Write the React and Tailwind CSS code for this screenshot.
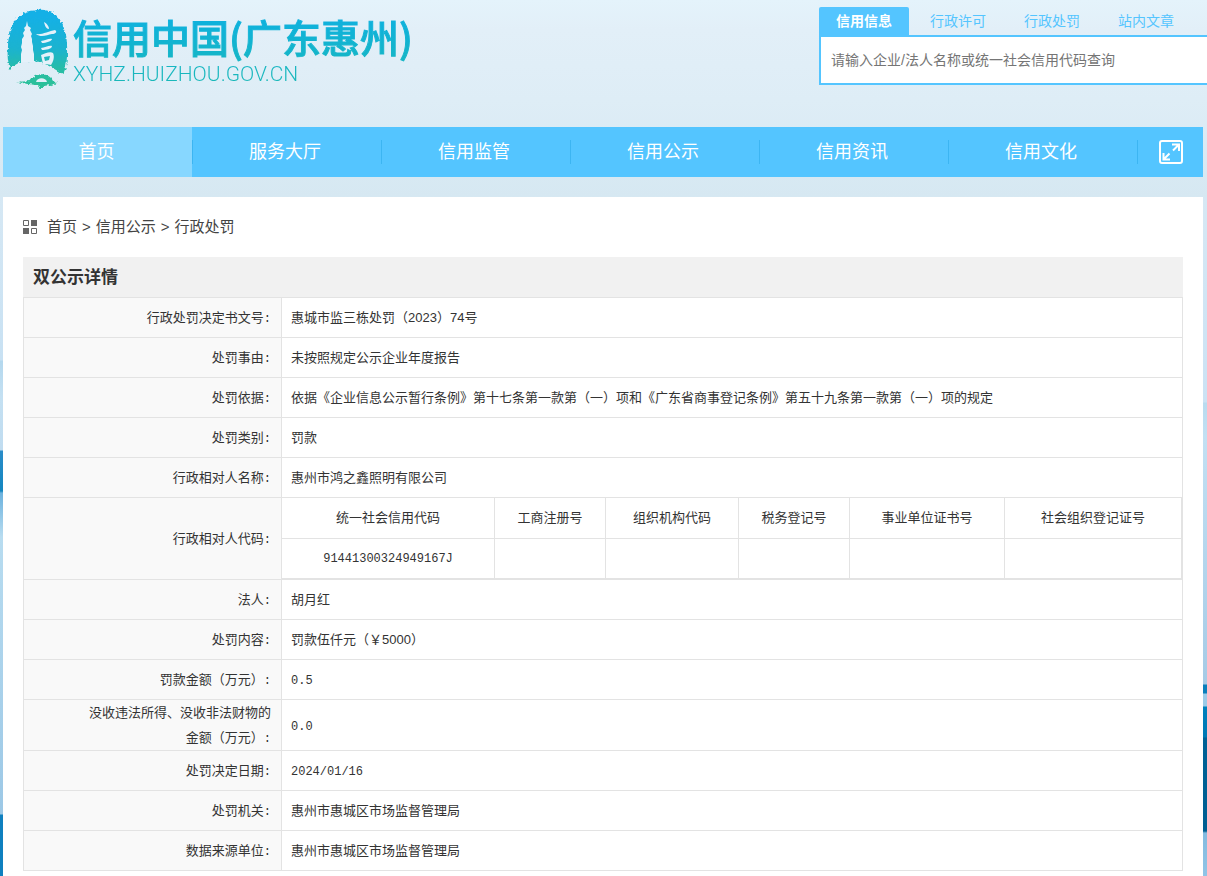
import React from 'react';

const SEARCH_TABS = ['信用信息', '行政许可', '行政处罚', '站内文章'];

const NAV_ITEMS = ['首页', '服务大厅', '信用监管', '信用公示', '信用资讯', '信用文化'];

const ROWS_BEFORE = [
  { label: '行政处罚决定书文号', value: '惠城市监三栋处罚（2023）74号' },
  { label: '处罚事由', value: '未按照规定公示企业年度报告' },
  {
    label: '处罚依据',
    value:
      '依据《企业信息公示暂行条例》第十七条第一款第（一）项和《广东省商事登记条例》第五十九条第一款第（一）项的规定',
  },
  { label: '处罚类别', value: '罚款' },
  { label: '行政相对人名称', value: '惠州市鸿之鑫照明有限公司' },
];

const ROWS_AFTER = [
  { label: '法人', value: '胡月红' },
  { label: '处罚内容', value: '罚款伍仟元（￥5000）' },
  { label: '罚款金额（万元）', value: '0.5', numeric: true },
  { label: '没收违法所得、没收非法财物的金额（万元）', value: '0.0', numeric: true },
  { label: '处罚决定日期', value: '2024/01/16', numeric: true },
  { label: '处罚机关', value: '惠州市惠城区市场监督管理局' },
  { label: '数据来源单位', value: '惠州市惠城区市场监督管理局' },
];

const CODES = [
  { name: '统一社会信用代码', value: '91441300324949167J', width: 'w-[213px]' },
  { name: '工商注册号', value: '', width: 'w-[111px]' },
  { name: '组织机构代码', value: '', width: 'w-[133px]' },
  { name: '税务登记号', value: '', width: 'w-[111px]' },
  { name: '事业单位证书号', value: '', width: 'w-[155px]' },
  { name: '社会组织登记证号', value: '', width: '' },
];

/* Seal shaped mark: pagoda, brush strokes and the bridge below */
const LogoMark = () => (
  <svg viewBox="0 0 62 82" className="w-[62px] h-[82px] shrink-0" aria-hidden="true">
    <defs>
      <linearGradient id="seal" x1="0" y1="0" x2="0" y2="82" gradientUnits="userSpaceOnUse">
        <stop offset="0.1" stopColor="#14b0e6" />
        <stop offset="0.5" stopColor="#1bb3cf" />
        <stop offset="0.75" stopColor="#27bda6" />
        <stop offset="1" stopColor="#2cc194" />
      </linearGradient>
      <filter id="rough" x="-10%" y="-10%" width="120%" height="120%" colorInterpolationFilters="sRGB">
        <feTurbulence type="fractalNoise" baseFrequency="0.3" numOctaves="2" seed="4" />
        <feDisplacementMap in="SourceGraphic" scale="5" xChannelSelector="R" yChannelSelector="G" />
      </filter>
    </defs>
    <g filter="url(#rough)">
      <path
        d="M30 2C41 1 49 5 53 12C58 20 61 31 60 46C60 55 59 61 56 66C50 63 45 59 38 56C31 53 22 52 14 54C9 56 6 58 3 61C1 55 0 48 1 39C1 28 4 17 11 9C16 4 22 3 30 2Z"
        fill="url(#seal)"
      />
      <path d="M9 74L23 73C28 64 42 64 46 73L50 75L43 77L37 78L34 81L28 77Z" fill="url(#seal)" />
    </g>
    <path d="M29 74C30 69 39 69 40 74Z" fill="#e2f0f9" />
    <g fill="#e5f1fa">
      <path d="M20 13L21 18L24 20L23 22L25 26L24 28L25 31V34L26 38V42L27 46V54H14V46L15 42L14 39L15 35V31L17 28L16 25L18 22L17 20L19 18Z" />
      <path d="M37 14C39 15 42 18 42 21C39 21 38 18 37 14Z" />
      <path d="M29 26C35 27 42 23 48 22C51 24 48 26 45 26C40 27 34 30 29 26Z" />
      <path d="M34 33C38 33 42 30 45 31C45 33 39 35 35 35Z" />
      <path d="M34 40C38 40 42 37 45 38C45 41 39 42 35 42Z" />
      <path d="M34 47C37 46 43 43 46 45C48 49 46 54 44 57C41 56 38 56 36 56ZM37 49L38 53L42 52L43 48Z" fillRule="evenodd" />
    </g>
  </svg>
);

const ExpandIcon = () => (
  <svg viewBox="0 0 24 24" className="w-6 h-6" fill="none" stroke="white" strokeWidth="2" aria-hidden="true">
    <rect x="1" y="1" width="22" height="22" rx="2" />
    <path d="M13 4.500H20V11M19.500 5L14 10.500M4.500 13V19.500H11M5 19L10.500 13.500" />
  </svg>
);

const GridIcon = () => (
  <svg viewBox="0 0 14 14" className="w-[14px] h-[14px]" aria-hidden="true">
    <path d="M0.500 0.500H5.500V5.500H0.500ZM8.500 8.500H13.500V13.500H8.500Z" fill="none" stroke="#666" />
    <path d="M8 0H14V6H8ZM0 8H6V14H0Z" fill="#666" />
  </svg>
);

const DetailRow = ({ label, value, numeric }) => (
  <tr>
    <th scope="row" className="h-10 border border-[#e3e3e3] bg-[#f9f9f9] pl-[60px] pr-[10px] py-0 text-right font-normal">
      {label}
      <span className="font-['Liberation_Mono',monospace] text-xs">:</span>
    </th>
    <td className="border border-[#e3e3e3] px-[9px] py-0">
      {numeric ? <span className="font-['Liberation_Mono',monospace] text-xs leading-3">{value}</span> : value}
    </td>
  </tr>
);

const App = () => {
  return (
    <div className="min-h-screen flex flex-col overflow-x-hidden bg-white font-['Liberation_Sans','Noto_Sans_CJK_SC',sans-serif] text-[#333]">
      <div className="grid grid-cols-[1fr_minmax(0,1200px)_minmax(4px,1fr)] bg-[linear-gradient(#e4f3fb,#e2eff8_30px,#deedf6_100px,#d6e8f2)] pb-5">
        {/* Logo and search */}
        <header className="col-start-2 h-[127px] flex items-start justify-between">
          <a href="#" className="flex pl-1 pt-2">
            <LogoMark />
            <span className="flex flex-col pl-1 bg-gradient-to-b from-[#0fb0e4] to-[#1cb8b4] bg-clip-text text-transparent font-['Noto_Sans_CJK_SC',sans-serif]">
              <span className="text-[39px] leading-[57px] font-medium whitespace-nowrap [-webkit-text-stroke:1px_transparent]">
                信用中国(广东惠州)
              </span>
              <span className="font-['Roboto',sans-serif] font-light text-[21px] leading-[18px]">XYHZ.HUIZHOU.GOV.CN</span>
            </span>
          </a>

          <form className="w-[400px] shrink-0 -mr-4 pt-[7px]">
            <div className="flex gap-1 text-sm">
              {SEARCH_TABS.map((tab, index) => (
                <button
                  key={tab}
                  type="button"
                  className={
                    index === 0
                      ? 'w-[90px] h-7 rounded-t-xs bg-[#54c5ff] font-bold text-white'
                      : 'w-[90px] h-7 text-[#54c5ff]'
                  }
                >
                  {tab}
                </button>
              ))}
            </div>
            <input
              type="text"
              aria-label="搜索"
              placeholder="请输入企业/法人名称或统一社会信用代码查询"
              className="block w-full h-[50px] border-2 border-[#54c5ff] bg-white px-[10px] text-sm placeholder:text-[#757575]"
            />
          </form>
        </header>

        {/* Main navigation */}
        <nav className="col-start-2 h-[50px] flex items-center bg-[#54c5ff] text-lg text-white">
          {NAV_ITEMS.map((item, index) => (
            <a
              key={item}
              href="#"
              className={
                index === 0
                  ? 'w-[189px] h-[50px] pr-0.5 leading-[50px] text-center bg-[#87d7ff]'
                  : 'w-[189px] h-6 pr-1 leading-6 text-center border-l border-[#3cb5f2]'
              }
            >
              {item}
            </a>
          ))}
          <div className="flex-1 h-6 flex justify-center border-l border-[#3cb5f2]">
            <button type="button" aria-label="展开">
              <ExpandIcon />
            </button>
          </div>
        </nav>
      </div>

      {/* Content with the wave backdrop on both sides */}
      <div className="grow grid grid-cols-[1fr_minmax(0,1200px)_minmax(4px,1fr)]">
        <div className="bg-[linear-gradient(#d6e8f4,#c8e1f3_163px,#b4d8ee_164px,#c4e0f2_200px,#c0dcf0_253px,#2a8cc8_254px,#1486c0_294px,#6cb2de_296px,#b8dcf0_340px,#9cc8e6_617px,#0f80bf_618px)]" />
        <main className="bg-white px-5 pb-1">
          <div className="h-[60px] flex items-center gap-[10px]">
            <GridIcon />
            <ol className="flex gap-[5px] text-[15px] text-[#444]">
              <li><a href="#">首页</a></li>
              <li>&gt;</li>
              <li><a href="#">信用公示</a></li>
              <li>&gt;</li>
              <li><a href="#">行政处罚</a></li>
            </ol>
          </div>

          <h2 className="h-10 bg-[#f1f1f1] px-[10px] text-[17px] leading-[42px] font-bold">双公示详情</h2>

          <table className="w-full table-fixed border-collapse text-[13px] leading-[25px]">
            <colgroup>
              <col className="w-[258px]" />
              <col />
            </colgroup>
            <tbody>
              {ROWS_BEFORE.map((row) => (
                <DetailRow key={row.label} {...row} />
              ))}
              <tr>
                <th scope="row" className="border border-[#e3e3e3] bg-[#f9f9f9] pr-[10px] py-0 text-right font-normal">
                  行政相对人代码
                  <span className="font-['Liberation_Mono',monospace] text-xs">:</span>
                </th>
                <td className="border border-[#e3e3e3] p-0">
                  <table className="w-full table-fixed border-separate border-spacing-0">
                    <thead>
                      <tr>
                        {CODES.map((code) => (
                          <th
                            key={code.name}
                            className={`${code.width} h-[41px] border-r border-b border-[#e3e3e3] px-0 pt-0 pb-0.5 font-normal`}
                          >
                            {code.name}
                          </th>
                        ))}
                      </tr>
                    </thead>
                    <tbody>
                      <tr>
                        {CODES.map((code) => (
                          <td
                            key={code.name}
                            className="h-10 border-r border-b border-[#e3e3e3] p-0 text-center font-['Liberation_Mono',monospace] text-xs"
                          >
                            {code.value}
                          </td>
                        ))}
                      </tr>
                    </tbody>
                  </table>
                </td>
              </tr>
              {ROWS_AFTER.map((row) => (
                <DetailRow key={row.label} {...row} />
              ))}
            </tbody>
          </table>
        </main>
        <div className="bg-[linear-gradient(#d6e8f4,#cbe2f4_205px,#b9dbef_206px,#c2e0f3_240px,#a6cbe6_487px,#0a7fbb_488px,#0a7fbb_496px,#9ccbe8_497px,#9ccbe8_509px,#0080bd_510px,#0078b4_540px,#006196_541px,#005f92_634px,#84bbe0_636px,#90c4e6)]" />
      </div>
    </div>
  );
};

export default App;
